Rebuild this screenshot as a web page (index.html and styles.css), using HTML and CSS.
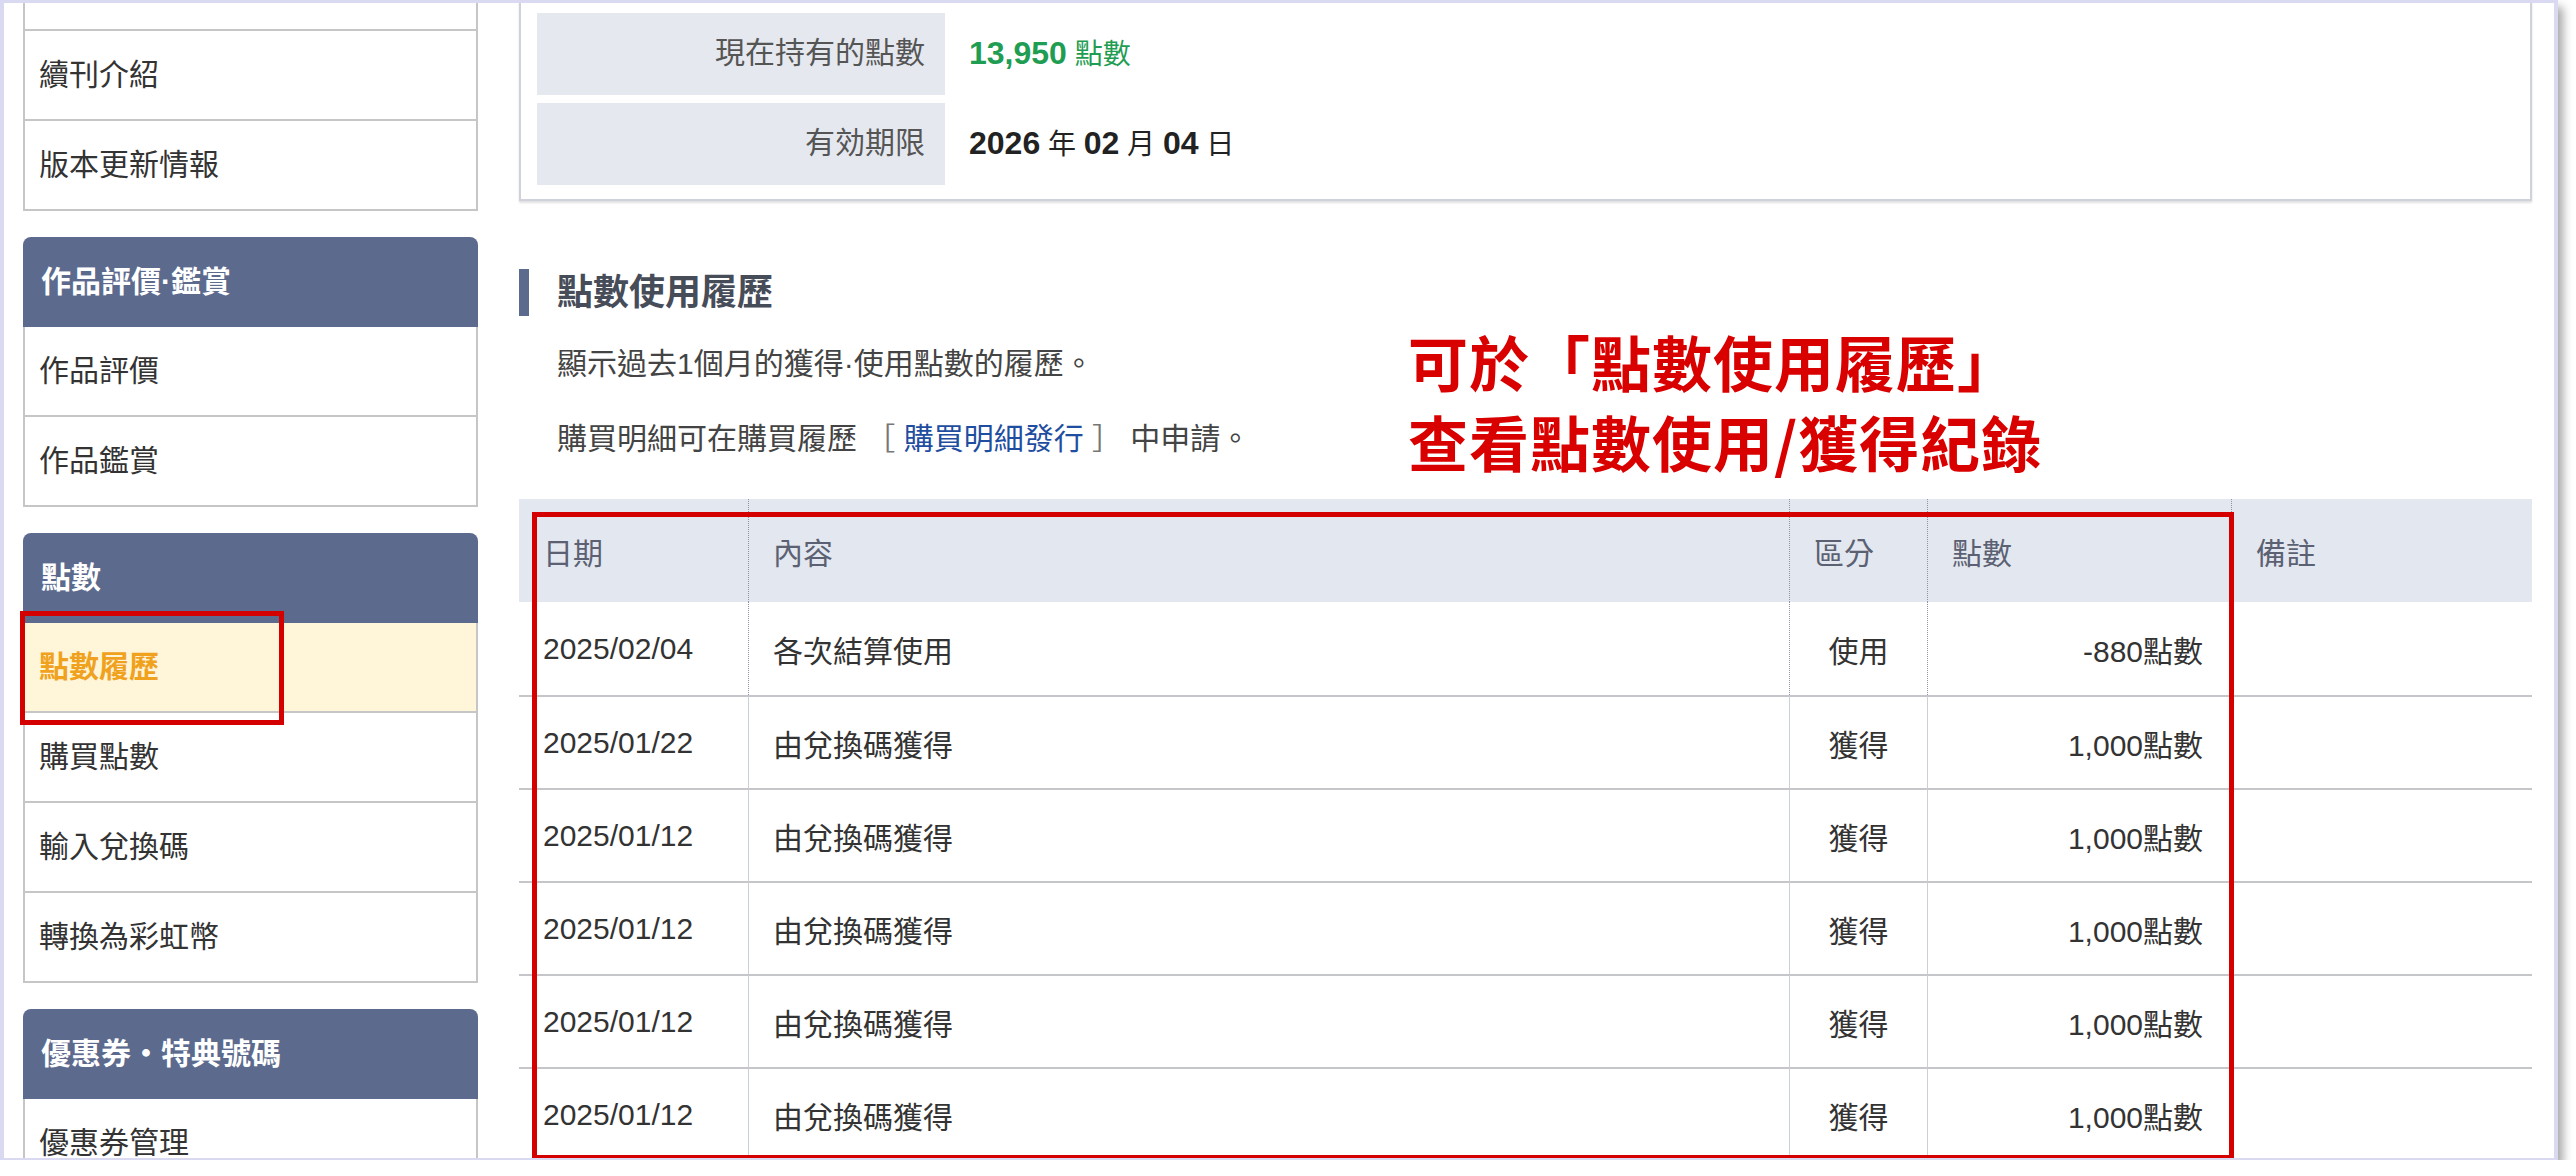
FILE: index.html
```html
<!DOCTYPE html>
<html>
<head>
    <link rel="stylesheet" href="styles.css">
</head>
<body>
    <div class="shot">
        <div class="layout">
            <aside class="sidebar">
                <div class="side-box">
                    <div class="side-list">
                        <a class="side-item">已購買作品一覽</a>
                        <a class="side-item">續刊介紹</a>
                        <a class="side-item">版本更新情報</a>
                    </div>
                </div>
                <div class="side-box">
                    <div class="side-head">作品評價·鑑賞</div>
                    <div class="side-list">
                        <a class="side-item">作品評價</a>
                        <a class="side-item">作品鑑賞</a>
                    </div>
                </div>
                <div class="side-box">
                    <div class="side-head">點數</div>
                    <div class="side-list">
                        <a class="side-item active">點數履歷<span class="mark mark-side"></span></a>
                        <a class="side-item">購買點數</a>
                        <a class="side-item">輸入兌換碼</a>
                        <a class="side-item">轉換為彩虹幣</a>
                    </div>
                </div>
                <div class="side-box">
                    <div class="side-head">優惠券・特典號碼</div>
                    <div class="side-list">
                        <a class="side-item">優惠券管理</a>
                    </div>
                </div>
            </aside>

            <main class="content">
                <div class="points-box">
                    <div class="pt-label">現在持有的點數</div>
                    <div class="pt-value green"><span class="num">13,950</span> 點數</div>
                    <div class="pt-label">有効期限</div>
                    <div class="pt-value"><span class="num">2026</span> 年 <span class="num">02</span> 月 <span class="num">04</span> 日</div>
                </div>

                <h2 class="section-title">點數使用履歷</h2>
                <p class="desc">顯示過去1個月的獲得·使用點數的履歷。</p>
                <p class="desc">購買明細可在購買履歷 <span class="bracket">［</span> <a class="link">購買明細發行</a> <span class="bracket">］</span> 中申請。</p>

                <div class="history-wrap">
                    <table class="history">
                        <colgroup>
                            <col class="c-date">
                            <col class="c-text">
                            <col class="c-type">
                            <col class="c-pt">
                            <col>
                        </colgroup>
                        <thead>
                            <tr>
                                <th>日期</th>
                                <th>內容</th>
                                <th>區分</th>
                                <th>點數</th>
                                <th>備註</th>
                            </tr>
                        </thead>
                        <tbody>
                            <tr>
                                <td>2025/02/04</td>
                                <td>各次結算使用</td>
                                <td class="type">使用</td>
                                <td class="pt">-880點數</td>
                                <td></td>
                            </tr>
                            <tr>
                                <td>2025/01/22</td>
                                <td>由兌換碼獲得</td>
                                <td class="type">獲得</td>
                                <td class="pt">1,000點數</td>
                                <td></td>
                            </tr>
                            <tr>
                                <td>2025/01/12</td>
                                <td>由兌換碼獲得</td>
                                <td class="type">獲得</td>
                                <td class="pt">1,000點數</td>
                                <td></td>
                            </tr>
                            <tr>
                                <td>2025/01/12</td>
                                <td>由兌換碼獲得</td>
                                <td class="type">獲得</td>
                                <td class="pt">1,000點數</td>
                                <td></td>
                            </tr>
                            <tr>
                                <td>2025/01/12</td>
                                <td>由兌換碼獲得</td>
                                <td class="type">獲得</td>
                                <td class="pt">1,000點數</td>
                                <td></td>
                            </tr>
                            <tr>
                                <td>2025/01/12</td>
                                <td>由兌換碼獲得</td>
                                <td class="type">獲得</td>
                                <td class="pt">1,000點數</td>
                                <td></td>
                            </tr>
                        </tbody>
                    </table>
                    <span class="mark mark-table"></span>
                </div>

                <div class="note">可於「點數使用履歷」<br>查看點數使用/獲得紀錄</div>
            </main>
        </div>
    </div>
</body>
</html>
```

FILE: styles.css
```css
body {
    margin: 0;
    background: #fff;
    font-family: "Liberation Sans", "Noto Sans CJK TC", sans-serif;
    color: #333;
}
.shot {
    width: 2558px;
    height: 1160px;
    box-sizing: border-box;
    border: solid #d9d9f1;
    border-width: 3px 4px 2px 4px;
    box-shadow: 5px 7px 9px rgba(0,0,0,0.35);
    background: #fff;
    overflow: hidden;
}
.layout {
    display: flex;
    align-items: flex-start;
    gap: 41px;
    padding: 0 22px 0 19px;
}

/* sidebar menu */
.sidebar {
    width: 455px;
    flex: none;
    margin-top: -62px;
    display: flex;
    flex-direction: column;
    gap: 26px;
}
.side-head {
    height: 90px;
    line-height: 90px;
    padding-left: 18px;
    background: #5c6a8e;
    color: #fff;
    font-size: 30px;
    font-weight: bold;
    border-radius: 8px 8px 0 0;
}
.side-list {
    border-left: 2px solid #c6c6c6;
    border-right: 2px solid #c6c6c6;
}
.side-item {
    display: block;
    height: 88px;
    line-height: 88px;
    padding-left: 14px;
    border-bottom: 2px solid #c6c6c6;
    font-size: 30px;
    color: #333;
}
.side-item.active {
    position: relative;
    background: #fff6da;
    color: #f0a21e;
    font-weight: bold;
}

/* red annotation frames */
.mark {
    position: absolute;
    box-sizing: border-box;
    border: 5px solid #d40000;
}
.mark-side {
    left: -5px;
    top: -12px;
    width: 264px;
    height: 114px;
}
.mark-table {
    left: 13px;
    top: 13px;
    width: 1702px;
    height: 648px;
}

/* main column */
.content {
    flex: 1;
    min-width: 0;
    margin-top: -6px;
    position: relative;
}
.points-box {
    display: grid;
    grid-template-columns: 408px 1fr;
    row-gap: 8px;
    padding: 14px 16px;
    border: 2px solid #cfd2da;
    box-shadow: 0 2px 2px rgba(0,0,0,0.12);
}
.pt-label {
    background: #e5e8ef;
    text-align: right;
    padding-right: 20px;
    line-height: 80px;
    font-size: 30px;
    color: #555;
}
.pt-value {
    padding-left: 24px;
    line-height: 80px;
    font-size: 28px;
    color: #222;
}
.pt-value .num {
    font-size: 32px;
    font-weight: bold;
}
.green {
    color: #1f9d52;
}

.section-title {
    margin: 68px 0 0;
    height: 47px;
    line-height: 47px;
    border-left: 10px solid #5c6a8e;
    padding-left: 28px;
    font-size: 36px;
    font-weight: bold;
    color: #474c59;
}
.desc {
    margin: 26px 0 0;
    padding-left: 38px;
    line-height: 44px;
    font-size: 30px;
    color: #444;
}
.desc + .desc {
    margin-top: 31px;
}
.bracket {
    color: #777;
}
.link {
    color: #1f4ea1;
}

/* history table */
.history-wrap {
    position: relative;
    margin-top: 38px;
}
.history {
    width: 100%;
    border-collapse: separate;
    border-spacing: 0;
    table-layout: fixed;
    font-size: 30px;
}
.c-date { width: 229px; }
.c-text { width: 1041px; }
.c-type { width: 138px; }
.c-pt { width: 304px; }
.history th {
    height: 103px;
    padding: 0 24px;
    background: #e3e7ef;
    color: #5b6172;
    font-weight: normal;
    text-align: left;
}
.history td {
    height: 93px;
    padding: 0 24px;
    color: #333;
    box-sizing: border-box;
}
.history th + th,
.history tbody tr:first-child td + td {
    border-left: 1px dotted #8c93a4;
}
.history tbody tr + tr td {
    border-top: 2px solid #c4c6ca;
}
.history tbody tr + tr td + td {
    border-left: 1px solid #cbcfd6;
}
.history .type {
    text-align: center;
}
.history .pt {
    text-align: right;
    padding-right: 28px;
}

.note {
    position: absolute;
    left: 889px;
    top: 324px;
    font-family: "Noto Sans CJK TC", sans-serif;
    font-size: 60px;
    font-weight: bold;
    line-height: 80px;
    letter-spacing: 1px;
    color: #d90000;
}
```
